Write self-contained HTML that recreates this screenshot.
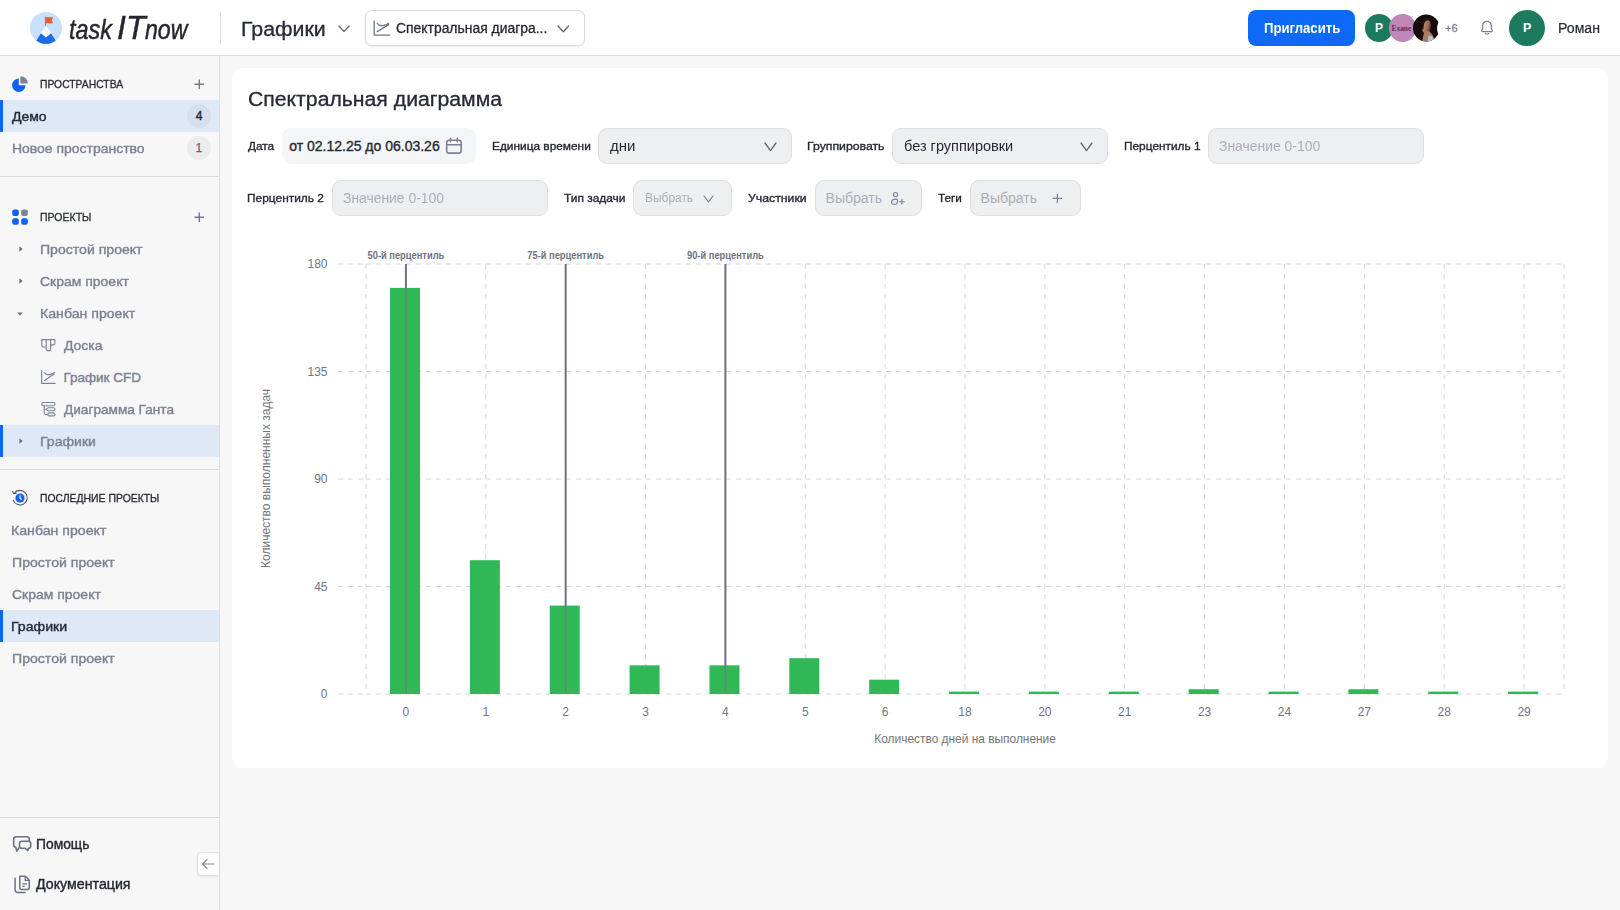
<!DOCTYPE html>
<html lang="ru"><head><meta charset="utf-8"><title>Спектральная диаграмма</title>
<style>
html,body{margin:0;padding:0}
body{width:1620px;height:910px;overflow:hidden;background:#f7f7f8;font-family:"Liberation Sans", sans-serif;position:relative}
.abs{position:absolute}
.hdr{position:absolute;left:0;top:0;width:1620px;height:55px;background:#fff;border-bottom:1px solid #d9dbe3}
.sel{left:0;width:219px;height:32px;background:#dfe8f7;border-left:3px solid #1264f3;box-sizing:border-box}
.inp{box-sizing:border-box;background:#eeeff1;border:1px solid #dcdee3;border-radius:9px}
.t{position:absolute;white-space:nowrap;transform-origin:0 50%;line-height:20px;height:20px}
</style></head><body>
<div class="hdr"></div>
<div class="abs" style="left:220px;top:12px;width:1px;height:32px;background:#dcdee4"></div>
<svg style="position:absolute;left:30px;top:11px" width="32" height="34" viewBox="0 0 32 34">
<defs><clipPath id="lc"><circle cx="16" cy="16.9" r="16"/></clipPath></defs>
<circle cx="16" cy="16.9" r="16" fill="#c9e0fb"/>
<g clip-path="url(#lc)">
<path d="M16 14.5 L28.5 34 H3.5 Z" fill="#1b6be6"/>
<path d="M16 14.5 L21.4 22 L16 26.4 L10.6 22 Z" fill="#ffffff"/>
</g>
<path d="M15.4 5.6 V14.8" stroke="#e9573a" stroke-width="1" fill="none"/>
<path d="M15.8 6.3 H23.2 L21.9 9.3 L23.2 12.3 H15.8 Z" fill="#f05a36"/>
</svg>
<svg style="position:absolute;left:337.5px;top:25px" width="12" height="7.6" viewBox="-1 -1 12 7.6"><path d="M0 0 L5.0 5.6 L10 0" fill="none" stroke="#5f6675" stroke-width="1.3" stroke-linecap="round" stroke-linejoin="round"/></svg>
<div class="abs" style="left:365px;top:10px;width:220px;height:36px;box-sizing:border-box;border:1px solid #d9dbe2;border-radius:7px;background:#fff;box-shadow:0 1px 2px rgba(30,40,70,.10)"></div>
<svg style="position:absolute;left:373px;top:20px" width="18" height="17" viewBox="0 0 18 17"><path d="M1.2 1 V15.2 H16.4" fill="none" stroke="#6d7484" stroke-width="1.3" stroke-linecap="round" stroke-linejoin="round"/><path d="M4.2 11.6 L15.6 4.6" fill="none" stroke="#6d7484" stroke-width="1.3" stroke-linecap="round"/><path d="M4.2 3.4 C6 5.6 7.4 6.2 9.4 5.6 C11.4 5 12.6 5.8 15.6 3.2" fill="none" stroke="#6d7484" stroke-width="1.3" stroke-linecap="round"/></svg>
<svg style="position:absolute;left:557px;top:25px" width="12.6" height="7.8" viewBox="-1 -1 12.6 7.8"><path d="M0 0 L5.3 5.8 L10.6 0" fill="none" stroke="#5f6675" stroke-width="1.3" stroke-linecap="round" stroke-linejoin="round"/></svg>
<div class="abs" style="left:1248px;top:10px;width:107px;height:36px;border-radius:8px;background:#0e69f7"></div>
<div class="abs" style="left:1365px;top:14px;width:28px;height:28px;border-radius:50%;background:#1d7a5f"></div>
<div class="abs" style="left:1389px;top:14px;width:27px;height:28px;border-radius:50%;background:#bf86b8"></div>
<svg style="position:absolute;left:1390px;top:21px" width="24" height="14" viewBox="0 0 24 14"><text x="11.4" y="9.6" font-family="Liberation Serif, serif" font-size="8.6" font-weight="700" text-anchor="middle" fill="#5e2f63" textLength="19.8" lengthAdjust="spacingAndGlyphs">Exane</text></svg>
<svg style="position:absolute;left:1413px;top:14px" width="28" height="28" viewBox="0 0 28 28"><defs><clipPath id="av3"><circle cx="13.2" cy="14" r="13.4"/></clipPath>
<filter id="bl" x="-20%" y="-20%" width="140%" height="140%"><feGaussianBlur stdDeviation="0.7"/></filter>
<linearGradient id="fg" x1="0" y1="0" x2="1" y2="0"><stop offset="0" stop-color="#b98a70"/><stop offset="0.65" stop-color="#9a6a55"/><stop offset="1" stop-color="#4a2b22"/></linearGradient></defs>
<g clip-path="url(#av3)">
<rect x="-1" y="-1" width="30" height="30" fill="#170b0b"/>
<g filter="url(#bl)">
<ellipse cx="13.6" cy="12.8" rx="4.4" ry="6.8" fill="url(#fg)" transform="rotate(12 13.4 12.6)"/>
<path d="M11.5 18.5 L16 17 L19.5 21 L22 28 H9.5 C9.5 24 10 21 11.5 18.5 Z" fill="#a67c68"/>
<path d="M15.5 21.5 L20 22.5 L21.5 29 H14.5 Z" fill="#b9c0cc"/>
<path d="M9.2 7.5 C10 3.5 15 2.5 18.5 5 C16.5 5.2 13 6 11.6 8.6 C10.6 11 10.8 14 10 16.5 C8.4 14 8.4 10.5 9.2 7.5Z" fill="#23130f"/>
</g>
</g><ellipse cx="27.8" cy="14.6" rx="3.7" ry="7.8" fill="#ffffff"/></svg>
<svg style="position:absolute;left:1479px;top:20px" width="16" height="17" viewBox="0 0 16 17"><g transform="translate(0,-0.3) scale(1,0.93)"><path d="M8 1.8 C5.2 1.8 3.7 3.9 3.7 6.6 V9.2 C3.7 10.4 2.6 11 2.6 12 C2.6 12.5 3 12.8 3.5 12.8 H12.5 C13 12.8 13.4 12.5 13.4 12 C13.4 11 12.3 10.4 12.3 9.2 V6.6 C12.3 3.9 10.8 1.8 8 1.8 Z" fill="none" stroke="#7a8191" stroke-width="1.2" stroke-linejoin="round"/><path d="M6.4 14.6 C7.2 15.4 8.8 15.4 9.6 14.6" fill="none" stroke="#7a8191" stroke-width="1.2" stroke-linecap="round"/></g></svg>
<div class="abs" style="left:1509px;top:10px;width:36px;height:36px;border-radius:50%;background:#1d7a5f"></div>
<div class="abs" style="left:219px;top:56px;width:1px;height:854px;background:#dcdee3"></div>
<div class="abs sel" style="top:100px"></div>
<div class="abs sel" style="top:425px"></div>
<div class="abs sel" style="top:610px"></div>
<div class="abs" style="left:0;top:176px;width:219px;height:1px;background:#d9dbe1"></div>
<div class="abs" style="left:0;top:469px;width:219px;height:1px;background:#d9dbe1"></div>
<div class="abs" style="left:0;top:817px;width:219px;height:1px;background:#d9dbe1"></div>
<div class="abs" style="left:187px;top:104px;width:24px;height:24px;border-radius:50%;background:#d5dfed"></div>
<div class="abs" style="left:187px;top:136px;width:24px;height:24px;border-radius:50%;background:#ebecee"></div>
<svg style="position:absolute;left:11px;top:75px" width="18" height="18" viewBox="0 0 18 18"><path d="M7.8 3.6 A6.7 6.7 0 1 0 14.5 10.3 H7.8 Z" fill="#0f62f2"/><path d="M9.4 1.2 A7.4 7.4 0 0 1 16.8 8.6 H9.4 Z" fill="#7b8292"/></svg>
<svg style="position:absolute;left:193.7px;top:79.0px" width="10.6" height="10.6" viewBox="-5.3 -5.3 10.6 10.6"><path d="M-4.3 0 H4.3 M0 -4.3 V4.3" fill="none" stroke="#737a8a" stroke-width="1.4" stroke-linecap="round"/></svg>
<svg style="position:absolute;left:12px;top:209px" width="16" height="16" viewBox="0 0 16 16"><rect x="0.2" y="0.4" width="6.6" height="6.6" rx="2" fill="#0f62f2"/><rect x="9.2" y="0.4" width="6.6" height="6.6" rx="2" fill="#7b8292"/><rect x="0.2" y="9.2" width="6.6" height="6.6" rx="2" fill="#0f62f2"/><rect x="9.2" y="9.2" width="6.6" height="6.6" rx="2" fill="#0f62f2"/></svg>
<svg style="position:absolute;left:193.7px;top:211.89999999999998px" width="10.6" height="10.6" viewBox="-5.3 -5.3 10.6 10.6"><path d="M-4.3 0 H4.3 M0 -4.3 V4.3" fill="none" stroke="#737a8a" stroke-width="1.4" stroke-linecap="round"/></svg>
<svg style="position:absolute;left:17.5px;top:245.2px" width="6" height="8" viewBox="-3 -4 6 8"><path d="M-1.6 -2.8 L1.7 0 L-1.6 2.8 Z" fill="#6b7282"/></svg>
<svg style="position:absolute;left:17.5px;top:277.2px" width="6" height="8" viewBox="-3 -4 6 8"><path d="M-1.6 -2.8 L1.7 0 L-1.6 2.8 Z" fill="#6b7282"/></svg>
<svg style="position:absolute;left:16px;top:310.6px" width="8" height="6" viewBox="-4 -3 8 6"><path d="M-2.8 -1.6 L2.8 -1.6 L0 1.7 Z" fill="#6b7282"/></svg>
<svg style="position:absolute;left:17.5px;top:437.2px" width="6" height="8" viewBox="-3 -4 6 8"><path d="M-1.6 -2.8 L1.7 0 L-1.6 2.8 Z" fill="#6b7282"/></svg>
<svg style="position:absolute;left:41px;top:339px" width="15" height="13" viewBox="0 0 15 13"><path d="M0.8 0.6 H13.8 V4.6 C13.8 5.4 13.4 5.8 12.6 5.8 H9.6 V10.4 C9.6 11.2 9.2 11.6 8.4 11.6 H6.4 C5.6 11.6 5.2 11.2 5.2 10.4 V8 H2 C1.2 8 0.8 7.6 0.8 6.8 Z M5.2 0.6 V8 M9.6 0.6 V5.8" fill="none" stroke="#7b8292" stroke-width="1.15" stroke-linejoin="round"/></svg>
<svg style="position:absolute;left:41px;top:370px" width="15" height="15" viewBox="0 0 15 15"><path d="M0.7 0.5 V13.4 H14" fill="none" stroke="#7b8292" stroke-width="1.15" stroke-linecap="round" stroke-linejoin="round"/><path d="M3.4 10.4 L13.4 3.8" fill="none" stroke="#7b8292" stroke-width="1.15" stroke-linecap="round"/><path d="M3.4 2.6 C5 4.6 6.2 5.2 8 4.6 C9.8 4 10.8 4.8 13.4 2.4" fill="none" stroke="#7b8292" stroke-width="1.15" stroke-linecap="round"/></svg>
<svg style="position:absolute;left:41px;top:401px" width="15" height="16" viewBox="0 0 15 16"><rect x="0.7" y="1.5" width="13.3" height="3.2" rx="1.6" fill="none" stroke="#7b8292" stroke-width="1.1"/><path d="M3.2 4.7 V12 C3.2 13.2 3.8 13.6 5 13.6 H6.6 M3.2 8.2 H5.6" fill="none" stroke="#7b8292" stroke-width="1.1"/><rect x="5.8" y="6.7" width="8.2" height="3" rx="1.5" fill="none" stroke="#7b8292" stroke-width="1.1"/><rect x="6.8" y="11.9" width="7.2" height="3" rx="1.5" fill="none" stroke="#7b8292" stroke-width="1.1"/></svg>
<svg style="position:absolute;left:11px;top:489px" width="18" height="18" viewBox="0 0 18 18"><path d="M3.2 4.2 A7.3 7.3 0 1 1 2.2 11.4" fill="none" stroke="#4a5160" stroke-width="1.05" stroke-linecap="round"/><path d="M1.6 2.6 L2.9 4.7 L5.2 4.2" fill="none" stroke="#4a5160" stroke-width="1.05" stroke-linecap="round" stroke-linejoin="round"/><circle cx="9" cy="9" r="4.6" fill="#0f62f2"/><path d="M9 6.6 V9.2 L10.6 10.2" fill="none" stroke="#fff" stroke-width="1.1" stroke-linecap="round" stroke-linejoin="round"/></svg>
<svg style="position:absolute;left:12px;top:835px" width="20" height="18" viewBox="0 0 20 18"><path d="M17.3 5.4 V4.2 C17.3 2.6 16.4 1.7 14.8 1.7 H4.2 C2.6 1.7 1.7 2.6 1.7 4.2 V9.8 C1.7 11.4 2.4 12.2 3.8 12.3 L4.7 16 L7.3 12.6" fill="none" stroke="#6b7282" stroke-width="1.6" stroke-linejoin="round" stroke-linecap="round"/><path d="M9.8 6.2 H16.4 C17.9 6.2 18.7 7 18.7 8.5 V10.9 C18.7 12.4 17.9 13.2 16.4 13.2 L15.8 15.6 L12.9 13.2 H9.8 C8.3 13.2 7.5 12.4 7.5 10.9 V8.5 C7.5 7 8.3 6.2 9.8 6.2 Z" fill="none" stroke="#6b7282" stroke-width="1.6" stroke-linejoin="round"/></svg>
<svg style="position:absolute;left:13px;top:874px" width="18" height="20" viewBox="0 0 18 20"><path d="M6.8 2.3 H12.4 L16.3 6.2 V13.6 C16.3 14.8 15.7 15.4 14.5 15.4 H8.6 C7.4 15.4 6.8 14.8 6.8 13.6 Z" fill="none" stroke="#6b7282" stroke-width="1.5" stroke-linejoin="round"/><path d="M12.2 2.5 V6.4 H16.1" fill="none" stroke="#6b7282" stroke-width="1.3" stroke-linejoin="round"/><path d="M9.2 9.9 H14 M9.2 12.4 H11.6" fill="none" stroke="#6b7282" stroke-width="1.3"/><path d="M2.1 4.2 V15.8 C2.1 17.6 3 18.4 4.8 18.4 H12" fill="none" stroke="#6b7282" stroke-width="1.5" stroke-linecap="round"/></svg>
<div class="abs" style="left:197px;top:852px;width:22px;height:24px;box-sizing:border-box;background:#fff;border:1px solid #e1e3e8;border-right:none;border-radius:5px 0 0 5px;box-shadow:0 1px 2px rgba(30,40,70,.08)"></div>
<svg style="position:absolute;left:201px;top:858px" width="14" height="12" viewBox="0 0 14 12"><path d="M12.6 6 H1.6 M6 1.6 L1.6 6 L6 10.4" fill="none" stroke="#7b8292" stroke-width="1.2" stroke-linecap="round" stroke-linejoin="round"/></svg>
<div class="abs" style="left:232px;top:68px;width:1376px;height:700px;border-radius:12px;background:#fff"></div>
<div class="abs" style="left:282px;top:128px;width:194px;height:36px;border-radius:9px;background:#f4f5f6"></div>
<svg style="position:absolute;left:445px;top:137px" width="18" height="18" viewBox="0 0 18 18"><rect x="1.7" y="3.3" width="14.4" height="12.8" rx="2.4" fill="none" stroke="#7b8294" stroke-width="1.6"/><path d="M1.7 7.7 H16.1 M5.5 1.5 V4.6 M12.3 1.5 V4.6" fill="none" stroke="#7b8294" stroke-width="1.6" stroke-linecap="round"/></svg>
<div class="abs inp" style="left:598px;top:128px;width:194px;height:36px"></div>
<div class="abs inp" style="left:892px;top:128px;width:216px;height:36px"></div>
<div class="abs inp" style="left:1208px;top:128px;width:216px;height:36px"></div>
<div class="abs inp" style="left:332px;top:180px;width:216px;height:36px"></div>
<div class="abs inp" style="left:633px;top:180px;width:99px;height:36px"></div>
<div class="abs inp" style="left:815px;top:180px;width:107px;height:36px"></div>
<div class="abs inp" style="left:970px;top:180px;width:111px;height:36px"></div>
<svg style="position:absolute;left:763.5px;top:142.3px" width="13" height="9.6" viewBox="-1 -1 13 9.6"><path d="M0 0 L5.5 7.6 L11 0" fill="none" stroke="#5f6675" stroke-width="1.3" stroke-linecap="round" stroke-linejoin="round"/></svg>
<svg style="position:absolute;left:1080px;top:142.3px" width="13" height="9.6" viewBox="-1 -1 13 9.6"><path d="M0 0 L5.5 7.6 L11 0" fill="none" stroke="#5f6675" stroke-width="1.3" stroke-linecap="round" stroke-linejoin="round"/></svg>
<svg style="position:absolute;left:703px;top:194.8px" width="11" height="7.8" viewBox="-1 -1 11 7.8"><path d="M0 0 L4.5 5.8 L9 0" fill="none" stroke="#7b8292" stroke-width="1.2" stroke-linecap="round" stroke-linejoin="round"/></svg>
<svg style="position:absolute;left:1051.6px;top:192.6px" width="10.8" height="10.8" viewBox="-5.4 -5.4 10.8 10.8"><path d="M-4.4 0 H4.4 M0 -4.4 V4.4" fill="none" stroke="#7b8292" stroke-width="1.2" stroke-linecap="round"/></svg>
<svg style="position:absolute;left:890px;top:191px" width="16" height="15" viewBox="0 0 16 15"><circle cx="5.6" cy="3.6" r="2.1" fill="none" stroke="#7b8292" stroke-width="1.1"/><path d="M7.4 8.4 H4.6 C2.8 8.4 1.6 9.8 1.6 11.4 C1.6 12.6 2.4 13.2 3.4 13.2 H5.4 C6.6 13.2 7.2 12.4 7.4 11.4 Z" fill="none" stroke="#7b8292" stroke-width="1.1" stroke-linejoin="round"/><path d="M9.4 10.8 H14.4 M11.9 8.3 V13.3" fill="none" stroke="#7b8292" stroke-width="1.1" stroke-linecap="round"/></svg>
<svg style="position:absolute;left:0;top:0" width="1620" height="910" viewBox="0 0 1620 910" font-family='"Liberation Sans", sans-serif'>
<line x1="338" y1="694.00" x2="366.0" y2="694.00" stroke="#d5d6da" stroke-width="1" stroke-dasharray="5 5"/>
<line x1="366.0" y1="694.00" x2="1564.0" y2="694.00" stroke="#d5d6da" stroke-width="1" stroke-dasharray="5 5"/>
<text x="327.5" y="698.26" font-size="12" fill="#6f7585" text-anchor="end">0</text>
<line x1="338" y1="586.50" x2="366.0" y2="586.50" stroke="#d5d6da" stroke-width="1" stroke-dasharray="5 5"/>
<line x1="366.0" y1="586.50" x2="1564.0" y2="586.50" stroke="#d5d6da" stroke-width="1" stroke-dasharray="5 5"/>
<text x="327.5" y="590.76" font-size="12" fill="#6f7585" text-anchor="end">45</text>
<line x1="338" y1="479.00" x2="366.0" y2="479.00" stroke="#d5d6da" stroke-width="1" stroke-dasharray="5 5"/>
<line x1="366.0" y1="479.00" x2="1564.0" y2="479.00" stroke="#d5d6da" stroke-width="1" stroke-dasharray="5 5"/>
<text x="327.5" y="483.26" font-size="12" fill="#6f7585" text-anchor="end">90</text>
<line x1="338" y1="371.50" x2="366.0" y2="371.50" stroke="#d5d6da" stroke-width="1" stroke-dasharray="5 5"/>
<line x1="366.0" y1="371.50" x2="1564.0" y2="371.50" stroke="#d5d6da" stroke-width="1" stroke-dasharray="5 5"/>
<text x="327.5" y="375.76" font-size="12" fill="#6f7585" text-anchor="end">135</text>
<line x1="338" y1="264.00" x2="366.0" y2="264.00" stroke="#d5d6da" stroke-width="1" stroke-dasharray="5 5"/>
<line x1="366.0" y1="264.00" x2="1564.0" y2="264.00" stroke="#d5d6da" stroke-width="1" stroke-dasharray="5 5"/>
<text x="327.5" y="268.26" font-size="12" fill="#6f7585" text-anchor="end">180</text>
<line x1="366.00" y1="264.0" x2="366.00" y2="694.0" stroke="#d5d6da" stroke-width="1" stroke-dasharray="5 5"/>
<line x1="405.93" y1="264.0" x2="405.93" y2="694.0" stroke="#d5d6da" stroke-width="1" stroke-dasharray="5 5"/>
<line x1="485.80" y1="264.0" x2="485.80" y2="694.0" stroke="#d5d6da" stroke-width="1" stroke-dasharray="5 5"/>
<line x1="565.67" y1="264.0" x2="565.67" y2="694.0" stroke="#d5d6da" stroke-width="1" stroke-dasharray="5 5"/>
<line x1="645.53" y1="264.0" x2="645.53" y2="694.0" stroke="#d5d6da" stroke-width="1" stroke-dasharray="5 5"/>
<line x1="725.40" y1="264.0" x2="725.40" y2="694.0" stroke="#d5d6da" stroke-width="1" stroke-dasharray="5 5"/>
<line x1="805.27" y1="264.0" x2="805.27" y2="694.0" stroke="#d5d6da" stroke-width="1" stroke-dasharray="5 5"/>
<line x1="885.13" y1="264.0" x2="885.13" y2="694.0" stroke="#d5d6da" stroke-width="1" stroke-dasharray="5 5"/>
<line x1="965.00" y1="264.0" x2="965.00" y2="694.0" stroke="#d5d6da" stroke-width="1" stroke-dasharray="5 5"/>
<line x1="1044.87" y1="264.0" x2="1044.87" y2="694.0" stroke="#d5d6da" stroke-width="1" stroke-dasharray="5 5"/>
<line x1="1124.73" y1="264.0" x2="1124.73" y2="694.0" stroke="#d5d6da" stroke-width="1" stroke-dasharray="5 5"/>
<line x1="1204.60" y1="264.0" x2="1204.60" y2="694.0" stroke="#d5d6da" stroke-width="1" stroke-dasharray="5 5"/>
<line x1="1284.47" y1="264.0" x2="1284.47" y2="694.0" stroke="#d5d6da" stroke-width="1" stroke-dasharray="5 5"/>
<line x1="1364.33" y1="264.0" x2="1364.33" y2="694.0" stroke="#d5d6da" stroke-width="1" stroke-dasharray="5 5"/>
<line x1="1444.20" y1="264.0" x2="1444.20" y2="694.0" stroke="#d5d6da" stroke-width="1" stroke-dasharray="5 5"/>
<line x1="1524.07" y1="264.0" x2="1524.07" y2="694.0" stroke="#d5d6da" stroke-width="1" stroke-dasharray="5 5"/>
<line x1="1564.00" y1="264.0" x2="1564.00" y2="694.0" stroke="#d5d6da" stroke-width="1" stroke-dasharray="5 5"/>
<line x1="405.93" y1="264.0" x2="405.93" y2="694.0" stroke="#6c7283" stroke-width="2"/>
<text x="405.93" y="258.8" font-size="10" font-weight="700" fill="#6c7283" text-anchor="middle" textLength="76.8" lengthAdjust="spacingAndGlyphs">50-й перцентиль</text>
<line x1="565.67" y1="264.0" x2="565.67" y2="694.0" stroke="#6c7283" stroke-width="2"/>
<text x="565.67" y="258.8" font-size="10" font-weight="700" fill="#6c7283" text-anchor="middle" textLength="76.8" lengthAdjust="spacingAndGlyphs">75-й перцентиль</text>
<line x1="725.40" y1="264.0" x2="725.40" y2="694.0" stroke="#6c7283" stroke-width="2"/>
<text x="725.40" y="258.8" font-size="10" font-weight="700" fill="#6c7283" text-anchor="middle" textLength="76.8" lengthAdjust="spacingAndGlyphs">90-й перцентиль</text>
<rect x="390.0" y="287.89" width="30" height="406.11" fill="#30b856"/>
<line x1="405.93" y1="287.89" x2="405.93" y2="694.0" stroke="#6c7283" stroke-opacity="0.5" stroke-width="2"/>
<text x="405.93" y="716.4" font-size="12" fill="#6f7585" text-anchor="middle">0</text>
<rect x="469.87" y="560.22" width="30" height="133.78" fill="#30b856"/>
<text x="485.80" y="716.4" font-size="12" fill="#6f7585" text-anchor="middle">1</text>
<rect x="549.73" y="605.61" width="30" height="88.39" fill="#30b856"/>
<line x1="565.67" y1="605.61" x2="565.67" y2="694.0" stroke="#6c7283" stroke-opacity="0.5" stroke-width="2"/>
<text x="565.67" y="716.4" font-size="12" fill="#6f7585" text-anchor="middle">2</text>
<rect x="629.6" y="665.33" width="30" height="28.67" fill="#30b856"/>
<text x="645.53" y="716.4" font-size="12" fill="#6f7585" text-anchor="middle">3</text>
<rect x="709.47" y="665.33" width="30" height="28.67" fill="#30b856"/>
<line x1="725.40" y1="665.33" x2="725.40" y2="694.0" stroke="#6c7283" stroke-opacity="0.5" stroke-width="2"/>
<text x="725.40" y="716.4" font-size="12" fill="#6f7585" text-anchor="middle">4</text>
<rect x="789.33" y="658.17" width="30" height="35.83" fill="#30b856"/>
<text x="805.27" y="716.4" font-size="12" fill="#6f7585" text-anchor="middle">5</text>
<rect x="869.2" y="679.67" width="30" height="14.33" fill="#30b856"/>
<text x="885.13" y="716.4" font-size="12" fill="#6f7585" text-anchor="middle">6</text>
<rect x="949.07" y="691.61" width="30" height="2.39" fill="#30b856"/>
<text x="965.00" y="716.4" font-size="12" fill="#6f7585" text-anchor="middle">18</text>
<rect x="1028.93" y="691.61" width="30" height="2.39" fill="#30b856"/>
<text x="1044.87" y="716.4" font-size="12" fill="#6f7585" text-anchor="middle">20</text>
<rect x="1108.8" y="691.61" width="30" height="2.39" fill="#30b856"/>
<text x="1124.73" y="716.4" font-size="12" fill="#6f7585" text-anchor="middle">21</text>
<rect x="1188.67" y="689.22" width="30" height="4.78" fill="#30b856"/>
<text x="1204.60" y="716.4" font-size="12" fill="#6f7585" text-anchor="middle">23</text>
<rect x="1268.53" y="691.61" width="30" height="2.39" fill="#30b856"/>
<text x="1284.47" y="716.4" font-size="12" fill="#6f7585" text-anchor="middle">24</text>
<rect x="1348.4" y="689.22" width="30" height="4.78" fill="#30b856"/>
<text x="1364.33" y="716.4" font-size="12" fill="#6f7585" text-anchor="middle">27</text>
<rect x="1428.27" y="691.61" width="30" height="2.39" fill="#30b856"/>
<text x="1444.20" y="716.4" font-size="12" fill="#6f7585" text-anchor="middle">28</text>
<rect x="1508.13" y="691.61" width="30" height="2.39" fill="#30b856"/>
<text x="1524.07" y="716.4" font-size="12" fill="#6f7585" text-anchor="middle">29</text>
<text x="965.1" y="743.2" font-size="12" fill="#757575" text-anchor="middle" textLength="181.6" lengthAdjust="spacingAndGlyphs">Количество дней на выполнение</text>
<text transform="translate(269.8,478.4) rotate(-90)" font-size="12" fill="#757575" text-anchor="middle">Количество выполненных задач</text>
</svg>
<span class="t" style="left:68.93px;top:20.2px;font-size:28px;font-weight:400;color:#23262f;font-style:italic;-webkit-text-stroke:0.45px #23262f;transform:scaleX(0.8374);">task</span>
<span class="t" style="left:116.60px;top:18.4px;font-size:33px;font-weight:400;color:#23262f;font-style:italic;-webkit-text-stroke:0.45px #23262f;transform:scaleX(0.9700);">IT</span>
<span class="t" style="left:145.47px;top:20.2px;font-size:28px;font-weight:400;color:#23262f;font-style:italic;-webkit-text-stroke:0.45px #23262f;transform:scaleX(0.8262);">now</span>
<span class="t" style="left:240.53px;top:18.5px;font-size:20px;font-weight:400;color:#262a35;-webkit-text-stroke:0.3px #262a35;transform:scaleX(1.0643);">Графики</span>
<span class="t" style="left:396.38px;top:18.3px;font-size:14px;font-weight:400;color:#262a35;-webkit-text-stroke:0.3px #262a35;transform:scaleX(0.9931);">Спектральная диагра...</span>
<span class="t" style="left:1264.24px;top:18.3px;font-size:14px;font-weight:700;color:#ffffff;transform:scaleX(0.9382);">Пригласить</span>
<span class="t" style="left:1444.88px;top:18.3px;font-size:11px;font-weight:400;color:#7b8292;-webkit-text-stroke:0.3px #7b8292;transform:scaleX(1.0263);">+6</span>
<span class="t" style="left:1558.23px;top:18.3px;font-size:14px;font-weight:400;color:#262a35;-webkit-text-stroke:0.2px #262a35;transform:scaleX(1.0073);">Роман</span>
<span class="t" style="left:1375.03px;top:18.2px;font-size:12px;font-weight:700;color:#ffffff;">Р</span>
<span class="t" style="left:1522.99px;top:18.4px;font-size:12.5px;font-weight:700;color:#ffffff;">Р</span>
<span class="t" style="left:39.97px;top:74.0px;font-size:11.5px;font-weight:400;color:#262a35;-webkit-text-stroke:0.3px #262a35;transform:scaleX(0.8997);">ПРОСТРАНСТВА</span>
<span class="t" style="left:39.95px;top:207.0px;font-size:11.5px;font-weight:400;color:#262a35;-webkit-text-stroke:0.3px #262a35;transform:scaleX(0.9144);">ПРОЕКТЫ</span>
<span class="t" style="left:39.98px;top:488.0px;font-size:11.5px;font-weight:400;color:#262a35;-webkit-text-stroke:0.3px #262a35;transform:scaleX(0.9054);">ПОСЛЕДНИЕ ПРОЕКТЫ</span>
<span class="t" style="left:12.22px;top:106.9px;font-size:13.5px;font-weight:400;color:#262a35;-webkit-text-stroke:0.4px #262a35;transform:scaleX(1.0356);">Демо</span>
<span class="t" style="left:11.88px;top:138.9px;font-size:13.5px;font-weight:400;color:#7b8292;-webkit-text-stroke:0.4px #7b8292;transform:scaleX(1.0339);">Новое пространство</span>
<span class="t" style="left:195.63px;top:106.2px;font-size:12px;font-weight:400;color:#262a35;-webkit-text-stroke:0.4px #262a35;">4</span>
<span class="t" style="left:195.47px;top:138.2px;font-size:12px;font-weight:400;color:#5c6372;-webkit-text-stroke:0.25px #5c6372;">1</span>
<span class="t" style="left:39.88px;top:239.9px;font-size:13.5px;font-weight:400;color:#7b8292;-webkit-text-stroke:0.4px #7b8292;transform:scaleX(1.0424);">Простой проект</span>
<span class="t" style="left:40.38px;top:271.9px;font-size:13.5px;font-weight:400;color:#7b8292;-webkit-text-stroke:0.4px #7b8292;transform:scaleX(1.0353);">Скрам проект</span>
<span class="t" style="left:39.86px;top:303.9px;font-size:13.5px;font-weight:400;color:#7b8292;-webkit-text-stroke:0.4px #7b8292;transform:scaleX(1.0465);">Канбан проект</span>
<span class="t" style="left:63.91px;top:335.9px;font-size:13.5px;font-weight:400;color:#7b8292;-webkit-text-stroke:0.4px #7b8292;transform:scaleX(1.0304);">Доска</span>
<span class="t" style="left:63.40px;top:367.9px;font-size:13.5px;font-weight:400;color:#7b8292;-webkit-text-stroke:0.4px #7b8292;">График CFD</span>
<span class="t" style="left:63.92px;top:399.9px;font-size:13.5px;font-weight:400;color:#7b8292;-webkit-text-stroke:0.4px #7b8292;transform:scaleX(1.0090);">Диаграмма Ганта</span>
<span class="t" style="left:39.88px;top:431.9px;font-size:13.5px;font-weight:400;color:#7b8292;-webkit-text-stroke:0.4px #7b8292;transform:scaleX(1.0424);">Графики</span>
<span class="t" style="left:10.86px;top:520.9px;font-size:13.5px;font-weight:400;color:#7b8292;-webkit-text-stroke:0.4px #7b8292;transform:scaleX(1.0475);">Канбан проект</span>
<span class="t" style="left:11.88px;top:552.9px;font-size:13.5px;font-weight:400;color:#7b8292;-webkit-text-stroke:0.4px #7b8292;transform:scaleX(1.0443);">Простой проект</span>
<span class="t" style="left:12.38px;top:584.9px;font-size:13.5px;font-weight:400;color:#7b8292;-webkit-text-stroke:0.4px #7b8292;transform:scaleX(1.0353);">Скрам проект</span>
<span class="t" style="left:10.85px;top:616.9px;font-size:13.5px;font-weight:400;color:#262a35;-webkit-text-stroke:0.4px #262a35;transform:scaleX(1.0472);">Графики</span>
<span class="t" style="left:11.88px;top:648.9px;font-size:13.5px;font-weight:400;color:#7b8292;-webkit-text-stroke:0.4px #7b8292;transform:scaleX(1.0443);">Простой проект</span>
<span class="t" style="left:36.10px;top:834.4px;font-size:14px;font-weight:400;color:#262a35;-webkit-text-stroke:0.4px #262a35;transform:scaleX(0.9875);">Помощь</span>
<span class="t" style="left:35.87px;top:874.4px;font-size:14px;font-weight:400;color:#262a35;-webkit-text-stroke:0.4px #262a35;transform:scaleX(1.0151);">Документация</span>
<span class="t" style="left:248.40px;top:88.9px;font-size:20px;font-weight:400;color:#262a35;-webkit-text-stroke:0.3px #262a35;transform:scaleX(1.0606);">Спектральная диаграмма</span>
<span class="t" style="left:247.91px;top:136.3px;font-size:11.5px;font-weight:400;color:#262a35;-webkit-text-stroke:0.35px #262a35;transform:scaleX(1.0258);">Дата</span>
<span class="t" style="left:289.20px;top:136.3px;font-size:14px;font-weight:400;color:#262a35;-webkit-text-stroke:0.35px #262a35;">от 02.12.25 до 06.03.26</span>
<span class="t" style="left:491.71px;top:136.3px;font-size:11.5px;font-weight:400;color:#262a35;-webkit-text-stroke:0.35px #262a35;transform:scaleX(1.0318);">Единица времени</span>
<span class="t" style="left:609.50px;top:136.3px;font-size:14px;font-weight:400;color:#262a35;transform:scaleX(1.0699);">дни</span>
<span class="t" style="left:807.02px;top:136.3px;font-size:11.5px;font-weight:400;color:#262a35;-webkit-text-stroke:0.35px #262a35;transform:scaleX(1.0659);">Группировать</span>
<span class="t" style="left:903.62px;top:136.3px;font-size:14px;font-weight:400;color:#262a35;transform:scaleX(1.0369);">без группировки</span>
<span class="t" style="left:1123.71px;top:136.3px;font-size:11.5px;font-weight:400;color:#262a35;-webkit-text-stroke:0.35px #262a35;transform:scaleX(1.0316);">Перцентиль 1</span>
<span class="t" style="left:1218.55px;top:136.3px;font-size:14px;font-weight:400;color:#a9aeb8;transform:scaleX(0.9941);">Значение 0-100</span>
<span class="t" style="left:247.05px;top:188.3px;font-size:11.5px;font-weight:400;color:#262a35;-webkit-text-stroke:0.35px #262a35;transform:scaleX(1.0363);">Перцентиль 2</span>
<span class="t" style="left:342.55px;top:188.3px;font-size:14px;font-weight:400;color:#a9aeb8;transform:scaleX(0.9921);">Значение 0-100</span>
<span class="t" style="left:563.54px;top:188.3px;font-size:11.5px;font-weight:400;color:#262a35;-webkit-text-stroke:0.35px #262a35;transform:scaleX(1.0368);">Тип задачи</span>
<span class="t" style="left:644.89px;top:188.3px;font-size:12px;font-weight:400;color:#a9aeb8;transform:scaleX(0.9950);">Выбрать</span>
<span class="t" style="left:748.25px;top:188.3px;font-size:11.5px;font-weight:400;color:#262a35;-webkit-text-stroke:0.35px #262a35;transform:scaleX(1.0676);">Участники</span>
<span class="t" style="left:825.62px;top:188.3px;font-size:14px;font-weight:400;color:#a9aeb8;">Выбрать</span>
<span class="t" style="left:938.47px;top:188.3px;font-size:11.5px;font-weight:400;color:#262a35;-webkit-text-stroke:0.35px #262a35;transform:scaleX(1.0220);">Теги</span>
<span class="t" style="left:980.62px;top:188.3px;font-size:14px;font-weight:400;color:#a9aeb8;">Выбрать</span>
</body></html>
